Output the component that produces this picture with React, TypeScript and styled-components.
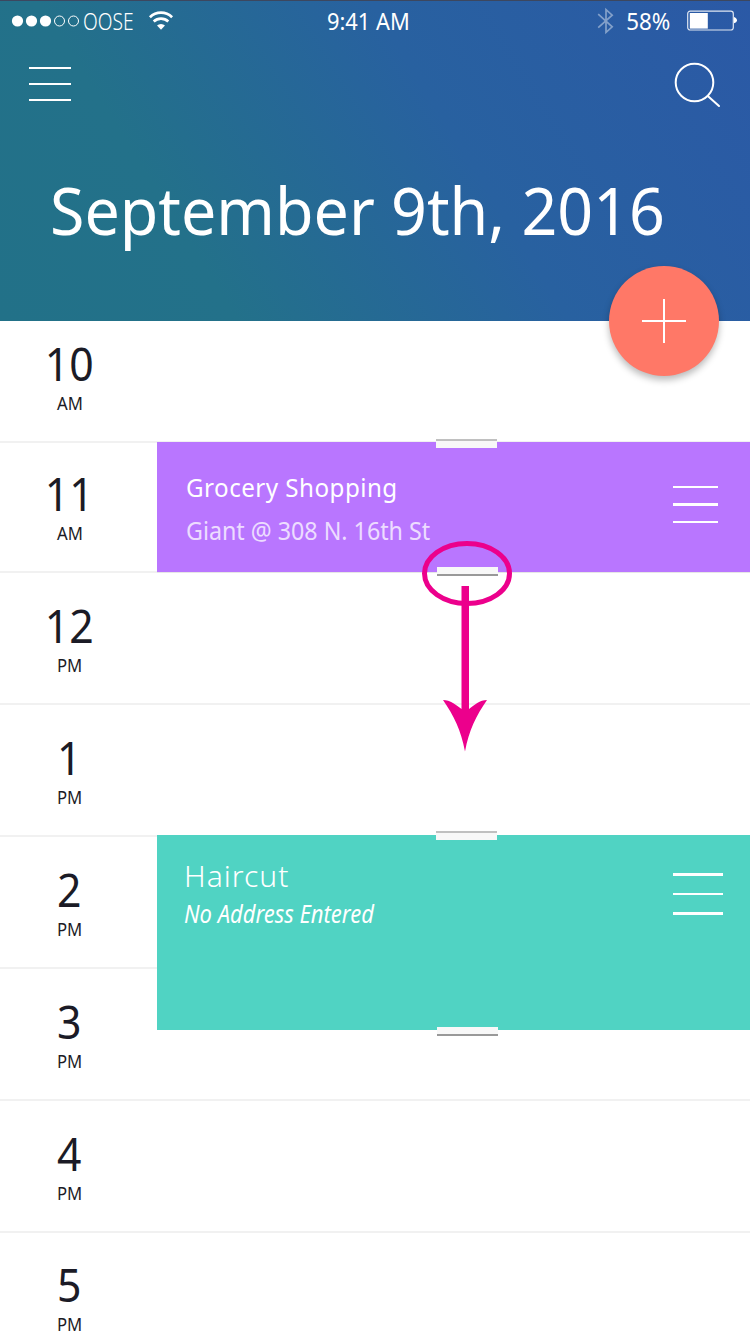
import React from "react";
import styled, { createGlobalStyle } from "styled-components";

const Global = createGlobalStyle`
  * { box-sizing: border-box; }
  html, body { margin: 0; padding: 0; background: #fff; }
  body { font-family: "Noto Sans", "Open Sans", sans-serif; overflow: hidden; }
  svg { display: block; }
`;

const Screen = styled.main`
  width: 750px;
  height: 1334px;
  overflow: hidden;
  position: relative;
  background: #fff;
`;

const Header = styled.header`
  height: 321px;
  border-top: 1px solid #3c475f;
  background: linear-gradient(58deg, #227188 0%, #23718a 25%, #2861a0 60%, #2b59a6 100%);
  color: #fff;
  position: relative;
`;

const StatusBar = styled.div`
  height: 40px;
  display: grid;
  grid-template-columns: 327px 1fr auto;
  align-items: center;
  padding-right: 12px;
`;

const StatusGroup = styled.div`
  display: flex;
  align-items: center;
`;

const Carrier = styled(StatusGroup)`
  padding-left: 11px;
`;

const Label = styled.span<{
  $size: number;
  $line: number;
  $squeeze?: number;
  $track?: number;
  $weight?: number;
  $width?: number;
  $from?: string;
}>`
  display: block;
  white-space: nowrap;
  font-size: ${(p) => p.$size}px;
  line-height: ${(p) => p.$line}px;
  font-weight: ${(p) => p.$weight ?? 400};
  letter-spacing: ${(p) => p.$track ?? 0}px;
  width: ${(p) => (p.$width ? `${p.$width}px` : "auto")};
  transform: scaleX(${(p) => p.$squeeze ?? 1});
  transform-origin: ${(p) => p.$from ?? "left"} center;
`;

const Nav = styled.nav`
  display: flex;
  justify-content: space-between;
  align-items: flex-start;
  padding: 21px 29px 0 29px;
  height: 68px;
`;

const Bars = styled.div<{ $width: number; $gap: number; $thick?: number }>`
  display: flex;
  flex-direction: column;
  gap: ${(p) => p.$gap}px;
  width: ${(p) => p.$width}px;
  &::before,
  &::after,
  & > i {
    content: "";
    display: block;
    height: ${(p) => p.$thick ?? 2}px;
    background: #fff;
  }
`;

const MenuBars = styled(Bars)`
  margin-top: 5px;
`;

const Title = styled.h1`
  margin: 0;
  padding: 60px 0 0 50px;
  font-weight: 400;
`;

const AddButton = styled.button`
  position: absolute;
  left: 609px;
  top: 265px;
  width: 110px;
  height: 110px;
  border: 0;
  padding: 0;
  border-radius: 50%;
  background: #ff7867;
  box-shadow: 0 4px 7px rgba(0, 0, 0, 0.27);
  display: grid;
  place-items: center;
  z-index: 2;
`;

const Schedule = styled.section`
  display: grid;
  grid-template-columns: 157px 1fr;
  grid-template-rows: 122px 130px repeat(6, 132px);
`;

const Hour = styled.div<{ $row: number; $top: number }>`
  grid-row: ${(p) => p.$row};
  grid-column: 1 / 3;
  border-bottom: 2px solid #f1f1f1;
  padding-top: ${(p) => p.$top}px;
  color: #1b1b26;
`;

const HourStack = styled.div`
  width: 139px;
  display: flex;
  flex-direction: column;
  align-items: center;
  gap: 7px;
`;

const Event = styled.article<{
  $row: number;
  $span: number;
  $lift: number;
  $height: number;
  $color: string;
}>`
  grid-row: ${(p) => p.$row} / span ${(p) => p.$span};
  grid-column: 2;
  position: relative;
  height: ${(p) => p.$height}px;
  margin-top: -${(p) => p.$lift}px;
  background: ${(p) => p.$color};
  color: #fff;
  display: flex;
  justify-content: space-between;
`;

const EventText = styled.div<{ $top: number; $left: number; $gap: number }>`
  padding: ${(p) => p.$top}px 0 0 ${(p) => p.$left}px;
  display: flex;
  flex-direction: column;
  gap: ${(p) => p.$gap}px;
`;

const Address = styled(Label)<{ $faded?: boolean; $italic?: boolean }>`
  opacity: ${(p) => (p.$faded ? 0.75 : 1)};
  font-style: ${(p) => (p.$italic ? "italic" : "normal")};
`;

const Grip = styled.div<{ $top: number; $right: number }>`
  margin: ${(p) => p.$top}px ${(p) => p.$right}px 0 0;
`;

const Handle = styled.div<{ $edge: "top" | "bottom" }>`
  position: absolute;
  width: 61px;
  height: 9px;
  background: #f8f8f8;
  ${(p) =>
    p.$edge === "top"
      ? "left: 279px; top: var(--rise); border-top: 2px solid #c0c0c0;"
      : "left: 280px; bottom: var(--drop); border-bottom: 2px solid #999;"}
`;

const Grocery = styled(Event)`
  --rise: -3px;
  --drop: -4px;
  box-shadow: 0 1px 0 #e6e6e6;
`;

const Haircut = styled(Event)`
  --rise: -4px;
  --drop: -6px;
`;

const DragHint = styled.svg`
  position: absolute;
  left: 420px;
  top: 538px;
  z-index: 3;
`;

const hours = [
  { n: "10", m: "AM", top: 19 },
  { n: "11", m: "AM", top: 27 },
  { n: "12", m: "PM", top: 29 },
  { n: "1", m: "PM", top: 29 },
  { n: "2", m: "PM", top: 29 },
  { n: "3", m: "PM", top: 29 },
  { n: "4", m: "PM", top: 29 },
  { n: "5", m: "PM", top: 28 },
];

const SignalDots = () => (
  <svg width="70" height="14" viewBox="0 0 70 14">
    {[0, 1, 2, 3, 4].map((i) => (
      <circle
        key={i}
        cx={6.5 + i * 14}
        cy="7"
        r={i < 3 ? 5.6 : 5}
        fill={i < 3 ? "#fff" : "none"}
        stroke={i < 3 ? "none" : "#fff"}
        strokeWidth="1"
      />
    ))}
  </svg>
);

const Wifi = () => (
  <svg width="26" height="20" viewBox="0 0 26 20" fill="none" stroke="#fff">
    <path d="M1.9 6.2 A16 16 0 0 1 24.1 6.2" strokeWidth="2.7" />
    <path d="M5.7 10.5 A10.6 10.6 0 0 1 20.3 10.5" strokeWidth="2.7" />
    <path d="M9 14.6 A5.8 5.8 0 0 1 17 14.6 L13 18.7 Z" fill="#fff" stroke="none" />
  </svg>
);

const Bluetooth = () => (
  <svg width="18" height="28" viewBox="0 0 18 28" fill="none" stroke="#fff" strokeWidth="1.7" opacity="0.42">
    <path d="M1.2 7.2 L15.2 19.8 L9 25.3 V2.6 L15.2 8.2 L1.2 20.6" />
  </svg>
);

const Battery = () => (
  <svg width="51" height="22" viewBox="0 0 51 22">
    <rect x="0.7" y="1.2" width="45.6" height="18.8" rx="2.5" fill="none" stroke="#fff" strokeOpacity="0.85" strokeWidth="1.2" />
    <rect x="2.8" y="3" width="18" height="15.6" fill="#fff" />
    <path d="M47 7 C48.5 7.3 50 9 50 10.3 C50 11.6 48.5 13 47 13.3 Z" fill="#fff" />
  </svg>
);

const Search = () => (
  <svg width="48" height="46" viewBox="0 0 48 46" fill="none" stroke="#fff" strokeWidth="2">
    <circle cx="21.5" cy="20.5" r="18.8" />
    <path d="M34.8 34 L46 44" strokeLinecap="round" />
  </svg>
);

export default function App() {
  return (
    <>
      <Global />
      <Screen>
        <Header>
          <StatusBar>
            <Carrier>
              <SignalDots />
              <Label $size={24} $line={34} $squeeze={0.8} $weight={300} $width={67} style={undefined}>
                &#8202;OOSE
              </Label>
              <Wifi />
            </Carrier>
            <Label $size={23.5} $line={34} $squeeze={0.93}>9:41 AM</Label>
            <StatusGroup>
              <Bluetooth />
              <Label $size={24} $line={34} $squeeze={0.93} $width={72}>
                &ensp;58%
              </Label>
              <Battery />
            </StatusGroup>
          </StatusBar>
          <Nav>
            <MenuBars $width={42} $gap={14}><i /></MenuBars>
            <Search />
          </Nav>
          <Title>
            <Label as="span" $size={66} $line={80} $squeeze={0.95}>September 9th, 2016</Label>
          </Title>
          <AddButton aria-label="Add event">
            <svg width="44" height="44" viewBox="0 0 44 44" stroke="#fff" strokeWidth="2">
              <path d="M22 0 V44 M0 22 H44" />
            </svg>
          </AddButton>
        </Header>

        <Schedule>
          {hours.map((h, i) => (
            <Hour key={h.n} $row={i + 1} $top={h.top}>
              <HourStack>
                <Label $size={46} $line={46} $squeeze={0.93} $from="center">{h.n}</Label>
                <Label $size={18} $line={20} $squeeze={0.93} $from="center">{h.m}</Label>
              </HourStack>
            </Hour>
          ))}

          <Grocery $row={2} $span={1} $lift={1} $height={130} $color="#b976ff">
            <Handle $edge="top" />
            <EventText $top={27} $left={29} $gap={7}>
              <Label $size={26} $line={36} $squeeze={0.93} $track={0.5}>Grocery Shopping</Label>
              <Address $size={25} $line={36} $squeeze={0.93} $faded>Giant @ 308 N. 16th St</Address>
            </EventText>
            <Grip $top={44} $right={32}>
              <Bars $width={45} $gap={15} $thick={2.3}><i /></Bars>
            </Grip>
            <Handle $edge="bottom" />
          </Grocery>

          <Haircut $row={5} $span={2} $lift={2} $height={195} $color="#50d3c3">
            <Handle $edge="top" />
            <EventText $top={22} $left={27} $gap={0}>
              <Label $size={30} $line={38} $weight={300} $track={1}>Haircut</Label>
              <Address $size={25} $line={36} $squeeze={0.88} $italic>No Address Entered</Address>
            </EventText>
            <Grip $top={38} $right={27}>
              <Bars $width={50} $gap={17} $thick={2.6}><i /></Bars>
            </Grip>
            <Handle $edge="bottom" />
          </Haircut>
        </Schedule>

        <DragHint width="94" height="216" viewBox="0 0 94 216">
          <ellipse cx="47" cy="35.5" rx="42.5" ry="30" fill="none" stroke="#ec008c" strokeWidth="5" />
          <path d="M41.5 48 H49 V171 C54 167 60 162 67 162 C56 178 49 192 45 213.5 C41 192 34 178 23 162 C30 162 36.500 167 41.500 171 Z" fill="#ec008c" />
        </DragHint>
      </Screen>
    </>
  );
}
